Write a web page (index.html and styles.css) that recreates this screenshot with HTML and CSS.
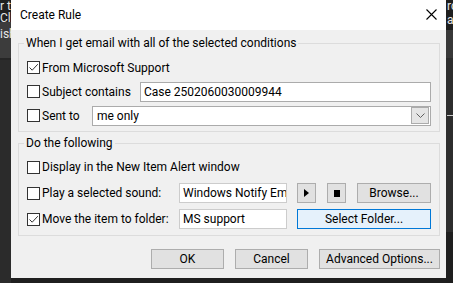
FILE: index.html
```html
<!DOCTYPE html>
<html lang="en">
<head>
    <meta charset="UTF-8">
    <title>Create Rule</title>
    <link rel="stylesheet" href="styles.css">
</head>
<body>
    <div class="side side-left">
        <div class="band band-top"><span>r th</span><span>Clic</span></div>
        <div class="band band-mid"><span>ish</span></div>
        <div class="band band-rest"></div>
    </div>

    <div class="dialog">
        <div class="titlebar">
            <span class="title">Create Rule</span>
            <svg class="close" width="11" height="11" viewBox="0 0 11 11">
                <path d="M0.5 0.5 L10.5 10.5 M10.5 0.5 L0.5 10.5" stroke="#000" stroke-width="1.1" fill="none"/>
            </svg>
        </div>

        <div class="content">
            <fieldset class="group group-when">
                <legend>When I get email with all of the selected conditions</legend>
                <div class="row">
                    <label class="check"><span class="box checked"><svg width="11" height="11" viewBox="0 0 11 11"><path d="M1.5 5.5 L4.2 8.2 L9.8 2.2" stroke="#333" stroke-width="1" fill="none"/></svg></span>From Microsoft Support</label>
                </div>
                <div class="row">
                    <label class="check lbl-subject"><span class="box"></span>Subject contains</label>
                    <div class="textbox">Case 2502060030009944</div>
                </div>
                <div class="row">
                    <label class="check lbl-sent"><span class="box"></span>Sent to</label>
                    <div class="combo">
                        <span>me only</span>
                        <span class="drop"><svg width="9" height="5" viewBox="0 0 9 5"><path d="M0.5 0.5 L4.5 4.5 L8.5 0.5" stroke="#606060" stroke-width="1" fill="none"/></svg></span>
                    </div>
                </div>
            </fieldset>

            <fieldset class="group group-do">
                <legend>Do the following</legend>
                <div class="row">
                    <label class="check"><span class="box"></span>Display in the New Item Alert window</label>
                </div>
                <div class="row">
                    <label class="check lbl-action"><span class="box"></span>Play a selected sound:</label>
                    <div class="textbox readonly short">Windows Notify Em</div>
                    <button class="btn btn-icon"><svg width="5" height="8" viewBox="0 0 5 8"><path d="M0 0 L5 4 L0 8 Z" fill="#000"/></svg></button>
                    <button class="btn btn-icon"><span class="stop"></span></button>
                    <button class="btn btn-browse">Browse...</button>
                </div>
                <div class="row">
                    <label class="check lbl-action"><span class="box checked"><svg width="11" height="11" viewBox="0 0 11 11"><path d="M1.5 5.5 L4.2 8.2 L9.8 2.2" stroke="#333" stroke-width="1" fill="none"/></svg></span>Move the item to folder:</label>
                    <div class="textbox readonly short">MS support</div>
                    <button class="btn btn-folder">Select Folder...</button>
                </div>
            </fieldset>

            <div class="actions">
                <button class="btn btn-ok">OK</button>
                <button class="btn btn-cancel">Cancel</button>
                <button class="btn btn-advanced">Advanced Options...</button>
            </div>
        </div>
    </div>

    <div class="side side-right">
        <div class="band band-top"><span>ro</span><span>a</span></div>
        <div class="band band-mid"></div>
        <div class="band band-rest"><span class="tick"></span></div>
        <div class="band band-low"></div>
    </div>
</body>
</html>
```

FILE: styles.css
```css
* {
    margin: 0;
    padding: 0;
    box-sizing: border-box;
}

body {
    font-family: Roboto, "Noto Sans", sans-serif;
    font-size: 12px;
    color: #000;
    background: #1f1f1f;
    width: 453px;
    height: 283px;
    overflow: hidden;
    display: flex;
    align-items: flex-start;
}

/* dark window behind the dialog */
.side {
    height: 283px;
    overflow: hidden;
    display: flex;
    flex-direction: column;
    color: #e6e6e6;
    white-space: nowrap;
}

.side-left { width: 11px; }
.side-right { width: 7px; }

.band { overflow: hidden; }
.band span { display: block; line-height: 13px; font-size: 12px; }

.side-left .band-top { height: 22px; background: #1f1f1f; padding-top: 0; }
.side-left .band-top span + span { margin-top: -1px; }
.side-left .band-mid { height: 36px; background: #3c3c3c; padding-top: 6px; }
.side-left .band-rest { flex: 1; background: #2b2b2b; border-top: 2px solid #262626; }

.side-right .band-top { height: 30px; background: #1f1f1f; padding: 0 0 0 1px; }
.side-right .band-top span + span { margin-top: 1px; }
.side-right .band-mid { height: 28px; background: #383838; }
.side-right .band-rest { height: 174px; background: #2d2d2d; padding-top: 57px; }
.side-right .band-low { flex: 1; background: #1e1e1e; }

.tick {
    width: 7px;
    height: 1px;
    background: #c8c8c8;
    margin-left: 1px;
}

.dialog {
    width: 435px;
    height: 278px;
    background: #f0f0f0;
    display: flex;
    flex-direction: column;
}

.titlebar {
    height: 30px;
    background: #fff;
    display: flex;
    align-items: center;
    justify-content: space-between;
    padding: 0 9px 1px 9px;
}

.content {
    padding: 5px 6px 0 7px;
}

.group {
    border: 1px solid #dcdcdc;
    padding: 6px 8px 5px 8px;
    display: flex;
    flex-direction: column;
    gap: 3px;
}

.group legend {
    padding: 0 2px;
    margin-left: -3px;
    line-height: 16px;
}

.group-do {
    margin-top: 3px;
    padding-top: 5px;
    gap: 4px;
}

.row {
    height: 21px;
    display: flex;
    align-items: center;
}

.group-do .row { height: 22px; }

.check {
    display: flex;
    align-items: center;
    gap: 2px;
    white-space: nowrap;
}

.lbl-subject { width: 113px; }
.lbl-sent { width: 65px; }
.lbl-action { width: 152px; }

.box {
    width: 13px;
    height: 13px;
    background: #fff;
    border: 1px solid #333;
    display: flex;
    align-items: center;
    justify-content: center;
}

.textbox {
    flex: 1;
    height: 20px;
    background: #fff;
    border: 1px solid #ababab;
    padding: 0 3px;
    line-height: 18px;
    white-space: nowrap;
    overflow: hidden;
}

.textbox.readonly {
    border-color: #cccccc;
}

.textbox.short {
    flex: none;
    width: 108px;
}

.combo {
    flex: 1;
    height: 20px;
    background: #fff;
    border: 1px solid #ababab;
    display: flex;
    align-items: center;
    justify-content: space-between;
    padding: 0 0 0 4px;
}

.drop {
    width: 18px;
    height: 17px;
    margin-right: 1px;
    background: #e5e5e5;
    border: 1px solid #ababab;
    display: flex;
    align-items: center;
    justify-content: center;
}

.btn {
    font-family: inherit;
    font-size: 12px;
    color: #000;
    height: 20px;
    background: #e1e1e1;
    border: 1px solid #adadad;
    display: flex;
    align-items: center;
    justify-content: center;
}

.btn-icon {
    width: 19px;
    margin-left: 10px;
}

.btn-icon + .btn-icon { margin-left: 11px; }

.stop {
    width: 6px;
    height: 7px;
    background: #000;
}

.btn-browse {
    margin-left: 11px;
    flex: 1;
}

.btn-folder {
    margin-left: 10px;
    flex: 1;
    background: #e5f1fb;
    border-color: #0078d7;
}

.actions {
    display: flex;
    justify-content: flex-end;
    gap: 11px;
    margin-top: 13px;
}

.btn-ok { width: 73px; }
.btn-cancel { width: 73px; }
.btn-advanced { width: 121px; }
```
